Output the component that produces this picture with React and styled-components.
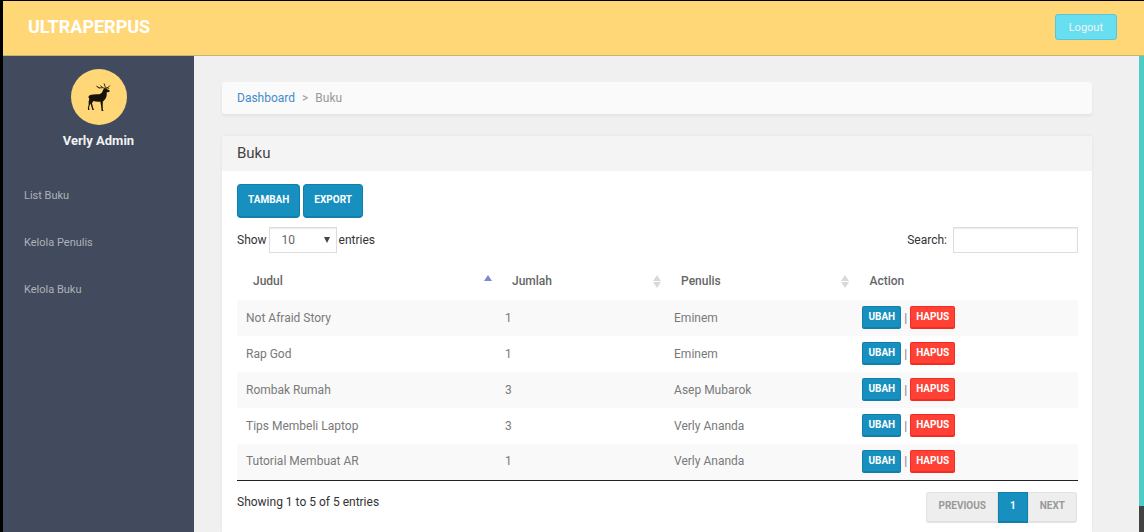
import React from 'react';
import styled, { createGlobalStyle } from 'styled-components';

const GlobalStyle = createGlobalStyle`
  * {
    box-sizing: border-box;
  }

  body {
    margin: 0;
    background: #000;
    color: #333;
    font-family: Roboto, 'Noto Sans', sans-serif;
    font-size: 12px;
    line-height: 18px;
  }

  button,
  input,
  select {
    font-family: inherit;
    font-size: inherit;
  }
`;

const Page = styled.div`
  display: flex;
  flex-direction: column;
  min-height: 100vh;
  padding: 1px 0 0 3px;
`;

const Header = styled.header`
  display: flex;
  align-items: center;
  justify-content: space-between;
  height: 55px;
  padding: 0 27px 2px 25px;
  background: #ffd777;
  border-bottom: 1px solid #c9b27a;
`;

const Logo = styled.a`
  color: #fff;
  font-size: 18px;
  font-weight: bold;
  line-height: 24px;
  text-decoration: none;
`;

const LogoutButton = styled.button`
  height: 26px;
  padding: 0 13px;
  background: #68dff0;
  border: 1px solid #5cc5d4;
  border-radius: 3px;
  color: #f2f2f2;
  font-size: 11px;
  cursor: pointer;
`;

const Columns = styled.div`
  display: flex;
  flex: 1;
`;

const Sidebar = styled.aside`
  flex: 0 0 191px;
  padding-top: 13px;
  background: #424a5d;
`;

const Profile = styled.div`
  display: flex;
  flex-direction: column;
  align-items: center;
`;

const Avatar = styled.div`
  display: flex;
  align-items: center;
  justify-content: center;
  width: 56px;
  height: 56px;
  background: #ffd777;
  border-radius: 50%;
`;

const UserName = styled.h5`
  margin: 7px 0 0;
  color: #f2f2f2;
  font-size: 13px;
  font-weight: bold;
  line-height: 18px;
`;

const Menu = styled.ul`
  display: flex;
  flex-direction: column;
  gap: 12px;
  margin: 28px 0 0;
  padding: 0;
  list-style: none;
`;

const MenuLink = styled.a`
  display: block;
  padding: 9px 21px 8px;
  color: #aeb2b7;
  font-size: 11px;
  text-decoration: none;

  &:hover {
    color: #fff;
  }
`;

const Main = styled.main`
  display: flex;
  flex: 1;
  flex-direction: column;
  gap: 22px;
  min-width: 0;
  padding: 26px 47px 0 28px;
  background: #f0f0f0;
`;

const Breadcrumb = styled.nav`
  display: flex;
  gap: 7px;
  padding: 7px 15px;
  background: #fafafa;
  border-radius: 3px;
  box-shadow: 0 2px 3px rgba(0, 0, 0, 0.06);
  color: #999;
`;

const BreadcrumbLink = styled.a`
  color: #428bca;
  text-decoration: none;
`;

const Card = styled.section`
  flex: 1;
  background: #fff;
  box-shadow: 0 0 3px rgba(0, 0, 0, 0.06);
`;

const CardTitle = styled.h4`
  margin: 0;
  padding: 7px 15px 8px;
  background: #f4f4f4;
  color: #444;
  font-size: 15px;
  font-weight: normal;
  line-height: 20px;
`;

const CardBody = styled.div`
  padding: 13px 14px 9px 15px;
`;

const Toolbar = styled.div`
  display: flex;
  gap: 3px;
`;

const ToolbarButton = styled.button`
  height: 34px;
  padding: 0 10px 2px;
  background: #178fbf;
  border: 1px solid #107fab;
  border-bottom-width: 2px;
  border-radius: 4px;
  color: #fff;
  font-size: 10px;
  font-weight: bold;
  cursor: pointer;
`;

const SplitRow = styled.div`
  display: flex;
  align-items: ${(props) => props.$align || 'center'};
  justify-content: space-between;
  margin-top: ${(props) => props.$top};
`;

const ControlLabel = styled.label`
  display: flex;
  align-items: center;
  gap: ${(props) => props.$gap};
`;

const SelectBox = styled.span`
  display: flex;
  align-items: center;
  width: 68px;
  height: 26px;
  border: 1px solid #ddd;
  box-shadow: inset 0 1px 1px rgba(0, 0, 0, 0.08);

  svg {
    flex: none;
    margin-right: 6px;
    pointer-events: none;
  }
`;

const Select = styled.select`
  flex: 1;
  min-width: 0;
  padding: 0 0 0 12px;
  appearance: none;
  background: transparent;
  border: 0;
  color: #666;
`;

const SearchInput = styled.input`
  width: 125px;
  height: 26px;
  padding: 0 8px;
  border: 1px solid #ddd;
  box-shadow: inset 0 1px 1px rgba(0, 0, 0, 0.08);
`;

const Table = styled.table`
  width: 100%;
  margin-top: 10px;
  table-layout: fixed;
  border-collapse: collapse;
  border-bottom: 1px solid #222;
`;

const HeadCell = styled.th`
  width: ${(props) => props.$width};
  height: 37px;
  padding: 0 4px 2px 16px;
  color: #666;
  font-weight: 500;
  text-align: left;
`;

const HeadContent = styled.div`
  display: flex;
  align-items: center;
  justify-content: space-between;
`;

const Row = styled.tr`
  background: #fff;

  &:nth-child(odd) {
    background: #f9f9f9;
  }
`;

const Cell = styled.td`
  height: 36px;
  padding: 0 9px 1px;
  color: #797979;
`;

const Actions = styled.div`
  display: flex;
  align-items: center;
  gap: 3px;
`;

const RowButton = styled.button`
  height: 23px;
  padding: 0 5px 1px;
  background: ${(props) => (props.$danger ? '#ff4136' : '#178fbf')};
  border: 1px solid ${(props) => (props.$danger ? '#f52b22' : '#107fab')};
  border-bottom-width: 2px;
  border-radius: 2px;
  color: #fff;
  font-size: 10px;
  font-weight: bold;
  cursor: pointer;
`;

const Info = styled.div`
  padding-top: 1px;
`;

const Pagination = styled.nav`
  display: flex;
  margin-right: 1px;
`;

const PageButton = styled.button`
  height: 31px;
  padding: 0 11px 2px;
  background: ${(props) => (props.$active ? '#178fbf' : '#eee')};
  border: 1px solid ${(props) => (props.$active ? '#107fab' : '#e2e2e2')};
  border-bottom-width: 2px;
  color: ${(props) => (props.$active ? '#fff' : '#999')};
  font-size: 10px;
  font-weight: bold;

  &:first-child {
    border-radius: 3px 0 0 3px;
  }

  &:last-child {
    border-radius: 0 3px 3px 0;
  }
`;

const Rail = styled.div`
  display: flex;
  flex: 0 0 5px;
  flex-direction: column;
  background: #4ecdc4;

  &::after {
    content: '';
    height: 26px;
    margin-top: auto;
    background: #424242;
  }
`;

const books = [
  { title: 'Not Afraid Story', count: 1, author: 'Eminem' },
  { title: 'Rap God', count: 1, author: 'Eminem' },
  { title: 'Rombak Rumah', count: 3, author: 'Asep Mubarok' },
  { title: 'Tips Membeli Laptop', count: 3, author: 'Verly Ananda' },
  { title: 'Tutorial Membuat AR', count: 1, author: 'Verly Ananda' },
];

const headings = [
  { label: 'Judul', width: '30.8%', sort: 'asc' },
  { label: 'Jumlah', width: '20.1%', sort: 'both' },
  { label: 'Penulis', width: '22.4%', sort: 'both' },
  { label: 'Action', width: '26.7%' },
];

const menuItems = ['List Buku', 'Kelola Penulis', 'Kelola Buku'];

const Deer = () => (
  <svg width="24" height="28" viewBox="0 0 24 28" aria-hidden="true">
    <path
      d="M1 14.500 2.300 12.500C4.500 11 8 11.600 12 11.300c2-.4 3.300-1.800 4-4.300l1.200-1.500 2-.4.6.9 2.900 1.600-.4 1.300-2.600.4c.3 2.900-.3 5.700-2.300 7.700l-1.500 1.500-.2 3.600.2 4.700.8 1.400h-2.100l-.5-5.200-.8-4.400c-2.400.5-5.100 0-7-.6L5 20.200l1.200 4.800.9 1.900H5.400l-1.900-6.400-1.200 2.700-.2 2.500.6 1.200H1.200L.8 25.500l.9-4-.1-3 .6-2-.2-2z"
      fill="#17130a"
    />
    <path
      d="M18 5.800 16 4.700l-3.500.2-2.800-1.600M12.500 4.900 11 4.500M15.500 4.700 13.800 2.800M18.300 5.800 18 3.200l-.8-2.400M18.600 5.200l2.700-.9 1.400-1.500M20 4.700l1.800.6"
      fill="none"
      stroke="#3b301a"
      strokeWidth="1"
      strokeLinecap="round"
    />
  </svg>
);

const SortIcon = ({ type }) => (
  <svg width="8" height="14" viewBox="0 0 8 14" aria-hidden="true">
    <path d="M4 1 8 7H0z" fill={type === 'asc' ? '#7d86d0' : '#d9d9d9'} />
    {type === 'both' && <path d="M4 14 0 8h8z" fill="#d9d9d9" />}
  </svg>
);

const TopBar = () => (
  <Header>
    <Logo href="#">ULTRAPERPUS</Logo>
    <LogoutButton type="button">Logout</LogoutButton>
  </Header>
);

const SideMenu = () => (
  <Sidebar>
    <Profile>
      <Avatar>
        <Deer />
      </Avatar>
      <UserName>Verly Admin</UserName>
    </Profile>
    <Menu>
      {menuItems.map((item) => (
        <li key={item}>
          <MenuLink href="#">{item}</MenuLink>
        </li>
      ))}
    </Menu>
  </Sidebar>
);

const BookTable = () => (
  <Table>
    <thead>
      <tr>
        {headings.map(({ label, width, sort }) => (
          <HeadCell key={label} $width={width} scope="col">
            <HeadContent>
              {label}
              {sort && <SortIcon type={sort} />}
            </HeadContent>
          </HeadCell>
        ))}
      </tr>
    </thead>
    <tbody>
      {books.map((book) => (
        <Row key={book.title}>
          <Cell>{book.title}</Cell>
          <Cell>{book.count}</Cell>
          <Cell>{book.author}</Cell>
          <Cell>
            <Actions>
              <RowButton type="button">UBAH</RowButton>
              <span>|</span>
              <RowButton type="button" $danger>
                HAPUS
              </RowButton>
            </Actions>
          </Cell>
        </Row>
      ))}
    </tbody>
  </Table>
);

const App = () => {
  return (
    <Page>
      <GlobalStyle />
      <TopBar />
      <Columns>
        <SideMenu />
        <Main>
          <Breadcrumb aria-label="Breadcrumb">
            <BreadcrumbLink href="#">Dashboard</BreadcrumbLink>
            <span>&gt;</span>
            <span>Buku</span>
          </Breadcrumb>

          <Card>
            <CardTitle>Buku</CardTitle>
            <CardBody>
              <Toolbar>
                <ToolbarButton type="button">TAMBAH</ToolbarButton>
                <ToolbarButton type="button">EXPORT</ToolbarButton>
              </Toolbar>

              <SplitRow $top="9px">
                <ControlLabel $gap="2px">
                  Show
                  <SelectBox>
                    <Select defaultValue="10">
                      <option>10</option>
                      <option>25</option>
                      <option>50</option>
                      <option>100</option>
                    </Select>
                    <svg width="6" height="6" viewBox="0 0 6 6">
                      <path d="M0 0h6L3 6z" fill="#444" />
                    </svg>
                  </SelectBox>
                  entries
                </ControlLabel>
                <ControlLabel $gap="6px">
                  Search:
                  <SearchInput type="search" />
                </ControlLabel>
              </SplitRow>

              <BookTable />

              <SplitRow $top="11px" $align="flex-start">
                <Info>Showing 1 to 5 of 5 entries</Info>
                <Pagination aria-label="Pages">
                  <PageButton type="button" disabled>
                    PREVIOUS
                  </PageButton>
                  <PageButton type="button" $active>
                    1
                  </PageButton>
                  <PageButton type="button" disabled>
                    NEXT
                  </PageButton>
                </Pagination>
              </SplitRow>
            </CardBody>
          </Card>
        </Main>
        <Rail />
      </Columns>
    </Page>
  );
};

export default App;
